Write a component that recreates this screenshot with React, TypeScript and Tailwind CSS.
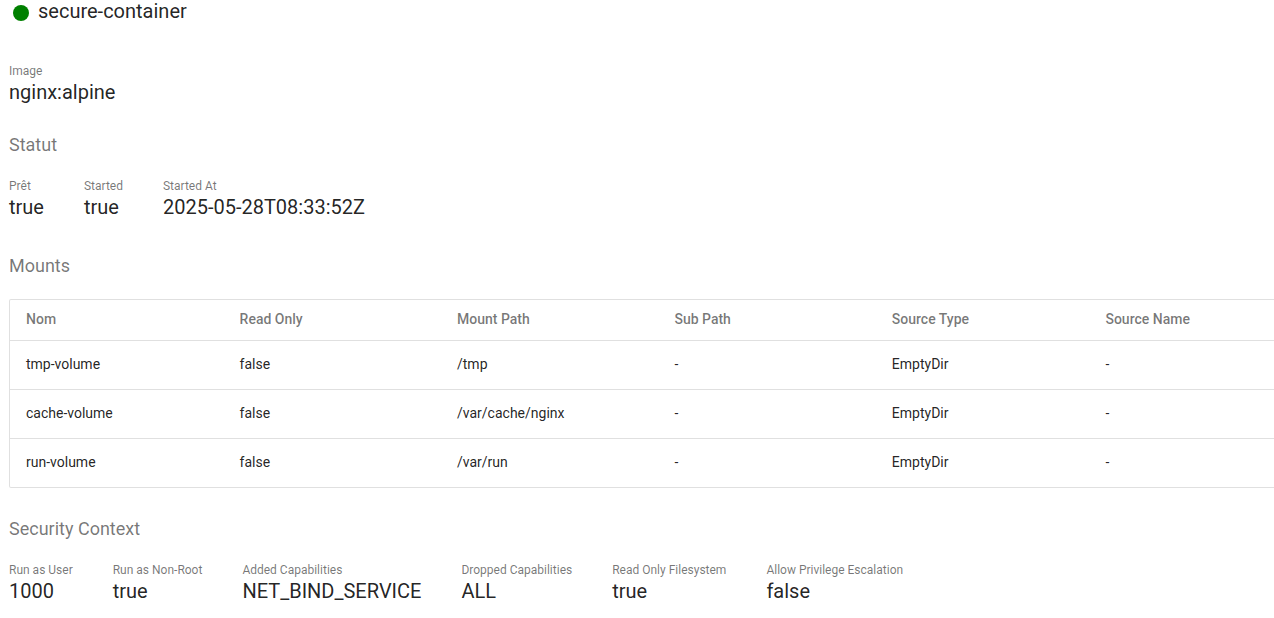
const columns = ["Nom", "Read Only", "Mount Path", "Sub Path", "Source Type", "Source Name"];

const mounts = [
  { name: "tmp-volume", readOnly: "false", path: "/tmp", sub: "-", type: "EmptyDir", source: "-" },
  { name: "cache-volume", readOnly: "false", path: "/var/cache/nginx", sub: "-", type: "EmptyDir", source: "-" },
  { name: "run-volume", readOnly: "false", path: "/var/run", sub: "-", type: "EmptyDir", source: "-" },
];

const security = [
  { label: "Run as User", value: "1000" },
  { label: "Run as Non-Root", value: "true" },
  { label: "Added Capabilities", value: "NET_BIND_SERVICE" },
  { label: "Dropped Capabilities", value: "ALL" },
  { label: "Read Only Filesystem", value: "true" },
  { label: "Allow Privilege Escalation", value: "false" },
];

const status = [
  { label: "Prêt", value: "true" },
  { label: "Started", value: "true" },
  { label: "Started At", value: "2025-05-28T08:33:52Z" },
];

function Property({ label, value }: { label: string; value: string }) {
  return (
    <div>
      <dt className="text-xs leading-4 text-black/54">{label}</dt>
      <dd className="text-xl leading-[26px]">{value}</dd>
    </div>
  );
}

function PropertyRow({ items }: { items: { label: string; value: string }[] }) {
  return (
    <dl className="flex gap-10 whitespace-nowrap">
      {items.map((item) => (
        <Property key={item.label} label={item.label} value={item.value} />
      ))}
    </dl>
  );
}

function SectionTitle({ children }: { children: string }) {
  return <h2 className="text-lg leading-6 text-black/54">{children}</h2>;
}

export default function App() {
  return (
    <main className="overflow-x-hidden bg-white pl-[9px] font-['Roboto',sans-serif] text-black/87">
      <header className="flex items-center gap-[9px] pl-1">
        <span className="mt-1 size-4 rounded-full bg-[#008000]" />
        <h1 className="text-xl leading-[22px]">secure-container</h1>
      </header>

      <section className="mt-[41px]">
        <PropertyRow items={[{ label: "Image", value: "nginx:alpine" }]} />
      </section>

      <section className="mt-7 flex flex-col gap-[21px]">
        <SectionTitle>Statut</SectionTitle>
        <PropertyRow items={status} />
      </section>

      <section className="mt-[34px] flex flex-col gap-[21px]">
        <SectionTitle>Mounts</SectionTitle>
        <div className="rounded-l-xs border border-r-0 border-black/12">
          <table className="w-full table-fixed text-left text-sm">
            <colgroup>
              <col className="w-[16.9%]" />
              <col className="w-[17.2%]" />
              <col className="w-[17.2%]" />
              <col className="w-[17.2%]" />
              <col className="w-[16.9%]" />
              <col />
            </colgroup>
            <thead className="text-black/54">
              <tr className="h-10">
                {columns.map((column) => (
                  <th key={column} scope="col" className="pb-0.5 pl-4 font-medium">{column}</th>
                ))}
              </tr>
            </thead>
            <tbody>
              {mounts.map((m) => (
                <tr key={m.name} className="h-[49px] border-t border-black/12">
                  <td className="pb-0.5 pl-4">{m.name}</td>
                  <td className="pb-0.5 pl-4">{m.readOnly}</td>
                  <td className="pb-0.5 pl-4">{m.path}</td>
                  <td className="pb-0.5 pl-4">{m.sub}</td>
                  <td className="pb-0.5 pl-4">{m.type}</td>
                  <td className="pb-0.5 pl-4">{m.source}</td>
                </tr>
              ))}
            </tbody>
          </table>
        </div>
      </section>

      <section className="mt-[29px] flex flex-col gap-[21px]">
        <SectionTitle>Security Context</SectionTitle>
        <PropertyRow items={security} />
      </section>
    </main>
  );
}
